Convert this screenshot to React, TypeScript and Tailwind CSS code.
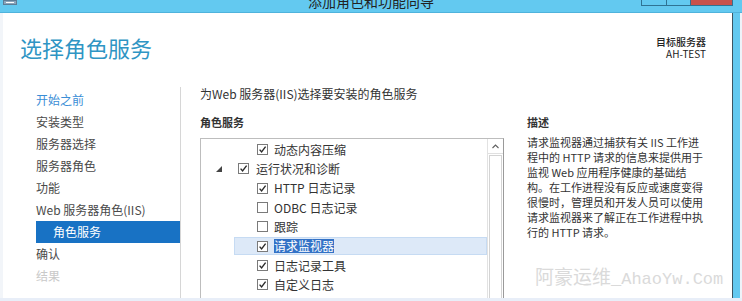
const cjk = { fontFamily: '"Noto Sans CJK SC", "Noto Sans", sans-serif' };

const navItems = [
  { label: "开始之前", tone: "link" },
  { label: "安装类型", tone: "normal" },
  { label: "服务器选择", tone: "normal" },
  { label: "服务器角色", tone: "normal" },
  { label: "功能", tone: "normal" },
  { label: "Web 服务器角色(IIS)", tone: "normal" },
  { label: "角色服务", tone: "active" },
  { label: "确认", tone: "normal" },
  { label: "结果", tone: "disabled" },
];

const rows = [
  { label: "动态内容压缩", level: 2, checked: true },
  { label: "运行状况和诊断", level: 1, checked: true, expander: true },
  { label: "HTTP 日志记录", level: 2, checked: true },
  { label: "ODBC 日志记录", level: 2, checked: false },
  { label: "跟踪", level: 2, checked: false },
  { label: "请求监视器", level: 2, checked: true, selected: true },
  { label: "日志记录工具", level: 2, checked: true },
  { label: "自定义日志", level: 2, checked: true },
];

const descLines = [
  "请求监视器通过捕获有关 IIS 工作进",
  "程中的 HTTP 请求的信息来提供用于",
  "监视 Web 应用程序健康的基础结",
  "构。在工作进程没有反应或速度变得",
  "很慢时，管理员和开发人员可以使用",
  "请求监视器来了解正在工作进程中执",
  "行的 HTTP 请求。",
];

const Checkbox = ({ checked }: { checked: boolean }) => (
  <span className="w-[11px] h-[11px] border border-[#7a7a7a] bg-white flex items-center justify-center shrink-0">
    {checked && (
      <svg width="9" height="9" viewBox="0 0 9 9">
        <path d="M1.6 4.6 L3.6 6.9 L7.6 1.6" fill="none" stroke="#2b2b2b" strokeWidth="1.4" />
      </svg>
    )}
  </span>
);

const App = () => {
  return (
    <div className="w-[742px] h-[301px] overflow-hidden flex flex-col bg-white text-[#444]" style={cjk}>
      {/* title bar */}
      <div className="relative h-[13px] bg-[#63c9f0] border-b border-[#4fb3dc] flex justify-center shrink-0">
        <div className="absolute left-[3px] top-0 w-[14px] h-[5px] bg-[#8ba6bd] border border-[#5e7d96] flex items-center justify-center">
          <span className="w-[8px] h-px bg-white"></span>
        </div>
        <span className="text-[14px] leading-[14px] mt-[-6px] text-[#222]">添加角色和功能向导</span>
        <div className="absolute right-[9px] top-0 flex h-[6px]">
          <span className="w-[26px] border border-t-0 border-[#2f7394] bg-[#63c9f0]"></span>
          <span className="w-[24px] border border-t-0 border-l-0 border-[#2f7394] bg-[#63c9f0]"></span>
          <span className="w-[42px] border border-t-0 border-l-0 border-[#2f7394] bg-[#c8524c]"></span>
        </div>
      </div>

      <div className="flex flex-1 min-h-0">
        <div className="w-[3px] bg-[#f2f5f9] shrink-0"></div>

        {/* window content */}
        <div className="flex-1 flex flex-col min-w-0">
          <div className="h-[74px] shrink-0 flex justify-between pl-[17px] pr-[26px]">
            <h1 className="text-[22px] leading-[26px] mt-[21px] text-[#2f95c4] font-normal">选择角色服务</h1>
            <div className="mt-[23px] text-right text-[10px] leading-[12px] text-[#222]">
              <div className="font-medium">目标服务器</div>
              <div>AH-TEST</div>
            </div>
          </div>

          <div className="flex flex-1 min-h-0">
            {/* nav */}
            <nav className="w-[178px] shrink-0 border-r border-[#d6d6d6] pl-[33px] pt-[2px] text-[12px]">
              {navItems.map((item) => (
                <div
                  key={item.label}
                  className={
                    item.tone === "active"
                      ? "h-[22px] leading-[22px] bg-[#1872c4] text-white pl-[17px]"
                      : item.tone === "link"
                      ? "h-[22px] leading-[22px] text-[#3a8ed6]"
                      : item.tone === "disabled"
                      ? "h-[22px] leading-[22px] text-[#c9c9c9]"
                      : "h-[22px] leading-[22px] text-[#4a4a4a]"
                  }
                >
                  {item.label}
                </div>
              ))}
            </nav>

            {/* main */}
            <div className="flex-1 flex flex-col pl-[19px] min-w-0">
              <p className="text-[12px] leading-[14px] text-[#333]">为Web 服务器(IIS)选择要安装的角色服务</p>
              <div className="flex flex-1 min-h-0 mt-[14px]">
                <div className="w-[304px] flex flex-col shrink-0">
                  <h2 className="text-[11px] leading-[14px] font-bold text-[#333]">角色服务</h2>
                  <div className="mt-[9px] flex-1 flex border border-[#bdbdbd] border-r-[#9a9a9a] border-b-0 bg-white">
                    <div className="flex-1 pt-[1px] text-[12px] text-[#333]">
                      {rows.map((r) => (
                        <div key={r.label} className="h-[19.33px] flex items-center">
                          <div
                            className={
                              r.selected
                                ? "ml-[33px] flex-1 h-[18px] flex items-center bg-[#dde9f8] border border-[#c6dbf3]"
                                : "ml-[33px] flex-1 h-[18px] flex items-center border border-transparent"
                            }
                          >
                            {r.level === 1 ? (
                              <>
                                <svg width="6" height="6" viewBox="0 0 6 6" className="ml-[-19px] mr-[16px]">
                                  <path d="M6 0 L6 6 L0 6 Z" fill="#444" />
                                </svg>
                                <Checkbox checked={r.checked} />
                                <span className="ml-[7px] leading-[14px]">{r.label}</span>
                              </>
                            ) : (
                              <>
                                <span className="ml-[22px]"></span>
                                <Checkbox checked={r.checked} />
                                <span
                                  className={
                                    r.selected
                                      ? "ml-[6px] leading-[14px] bg-[#3372c6] text-white"
                                      : "ml-[6px] leading-[14px]"
                                  }
                                >
                                  {r.label}
                                </span>
                              </>
                            )}
                          </div>
                        </div>
                      ))}
                    </div>
                    {/* scrollbar */}
                    <div className="w-[16px] border-l border-[#e2e2e2] bg-white flex flex-col">
                      <div className="h-[15px] border-b border-[#e0e0e0] flex items-center justify-center">
                        <svg width="7" height="5" viewBox="0 0 7 5">
                          <path d="M0.5 4 L3.5 1 L6.5 4" fill="none" stroke="#606060" strokeWidth="1.1" />
                        </svg>
                      </div>
                      <div className="flex-1 mx-[1px] mt-[1px] border border-b-0 border-[#d4d4d4] bg-white"></div>
                    </div>
                  </div>
                </div>

                <div className="flex-1 flex flex-col ml-[23px] min-w-0 text-[#333]">
                  <h2 className="text-[11px] leading-[14px] font-bold">描述</h2>
                  <div className="mt-[6px] text-[11px] leading-[15px]">
                    {descLines.map((l) => (
                      <div key={l} className="whitespace-nowrap">
                        {l}
                      </div>
                    ))}
                  </div>
                  <div className="mt-auto mb-[6px] ml-[8px] whitespace-nowrap text-[#dadada] leading-[24px]">
                    <span className="text-[19px]">阿豪运维</span>
                    <span className="text-[17px]" style={{ fontFamily: '"Liberation Mono", monospace' }}>
                      _AhaoYw.Com
                    </span>
                  </div>
                </div>
              </div>
            </div>
          </div>
        </div>

        {/* right frame */}
        <div className="w-[10px] shrink-0 flex">
          <span className="w-px bg-[#3d5562]"></span>
          <span className="w-[7px] bg-[#63c9f0]"></span>
          <span className="w-[2px] bg-[#eef3f9]"></span>
        </div>
      </div>
      <div className="h-[3px] bg-[#e8eef8] shrink-0"></div>
    </div>
  );
};

export default App;
